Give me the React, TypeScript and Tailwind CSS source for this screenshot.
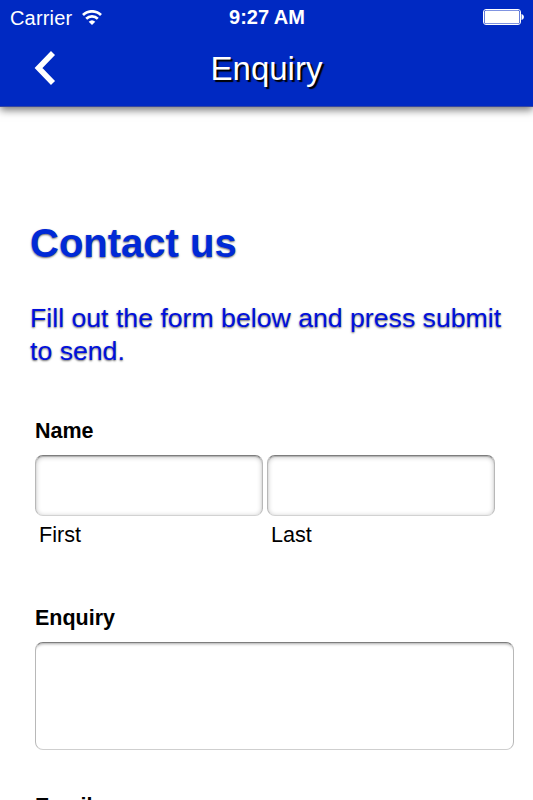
function StatusBar() {
  return (
    <div className="grid h-[34px] grid-cols-3 items-center pl-[10px] pr-[9px]">
      <div className="flex items-center gap-[9px] pt-px">
        <span className="w-[63px] whitespace-nowrap text-[20px] leading-none tracking-[0.18px]">Carrier</span>
        <svg className="mb-px" width="20" height="15" viewBox="0 0 20 15" fill="none" stroke="white" strokeWidth="2.7">
          <path d="M1 5a12.8 12.8 0 0 1 18 0" />
          <path d="M4.2 8.8a8.3 8.3 0 0 1 11.6 0" />
          <path d="M10 15 6.7 11.7a4.8 4.8 0 0 1 6.6 0Z" fill="white" stroke="none" />
        </svg>
      </div>
      <span className="text-center text-[20px] font-bold leading-none">9:27 AM</span>
      <svg className="justify-self-end" width="41" height="16" viewBox="0 0 41 16" fill="none">
        <rect x="0.5" y="0.5" width="37" height="15" rx="2.5" stroke="white" />
        <rect x="1.6" y="1.6" width="34.8" height="12.8" rx="1.5" fill="white" />
        <path d="M38.5 5c3.2.8 3.2 5.2 0 6Z" fill="white" />
      </svg>
    </div>
  );
}

function Field({ className }: { className: string }) {
  return (
    <input
      className={`block rounded-[8px] border border-[#b8b8b8] border-t-[#7d7d7d] border-b-[#d2d2d2] bg-white shadow-[inset_0_1px_5px_rgba(0,0,0,0.24),inset_0_1px_1px_rgba(0,0,0,0.2)] ${className}`}
    />
  );
}

export default function App() {
  return (
    <div className="h-[800px] w-[533px] overflow-hidden bg-white font-['Liberation_Sans',Arial,sans-serif] text-black">
      <header className="h-[107px] border-b border-[#36479f] bg-[#0029c2] text-white shadow-[0_3px_8px_rgba(0,0,0,0.55)]">
        <StatusBar />
        <div className="grid h-[68px] grid-cols-[90px_1fr_90px] items-center">
          <svg className="ml-[33px]" width="24" height="36" viewBox="0 0 24 36" fill="none" stroke="white" strokeWidth="5.6">
            <path d="M20 3 5.5 18 20 33" />
          </svg>
          <h1 className="text-center text-[33px] leading-none [text-shadow:2px_2px_1px_#000]">Enquiry</h1>
        </div>
      </header>

      <main className="pt-[113px]">
        <h2 className="pl-[30px] text-[40px] font-bold leading-[46px] text-[#0029d6] [text-shadow:0_1px_2px_rgba(0,0,0,0.6)]">
          Contact us
        </h2>
        <p className="mt-[36px] pl-[30px] text-[26.67px] leading-[33.3px] text-[#0010dc] [text-shadow:0_1px_2px_rgba(0,0,0,0.6)]">
          Fill out the form below and press submit
          <br />
          to send.
        </p>

        <form className="mt-[50px] pl-[35px]">
          <label className="block text-[21.5px] font-bold leading-6">Name</label>
          <div className="mt-3 flex gap-1">
            <div>
              <Field className="h-[61px] w-[228px]" />
              <label className="mt-[7px] block pl-1 text-[21.6px] leading-6">First</label>
            </div>
            <div>
              <Field className="h-[61px] w-[228px]" />
              <label className="mt-[7px] block pl-1 text-[21.6px] leading-6">Last</label>
            </div>
          </div>

          <label className="mt-[59px] block text-[21.5px] font-bold leading-6">Enquiry</label>
          <textarea className="mt-3 block h-[108px] w-[479px] resize-none rounded-[8px] border border-[#b8b8b8] border-t-[#7d7d7d] border-b-[#cfcfcf] bg-white shadow-[inset_0_4px_3px_-3px_rgba(0,0,0,0.35)]" />
          <label className="mt-[44px] block text-[21.5px] font-bold leading-6">Email</label>
        </form>
      </main>
    </div>
  );
}
